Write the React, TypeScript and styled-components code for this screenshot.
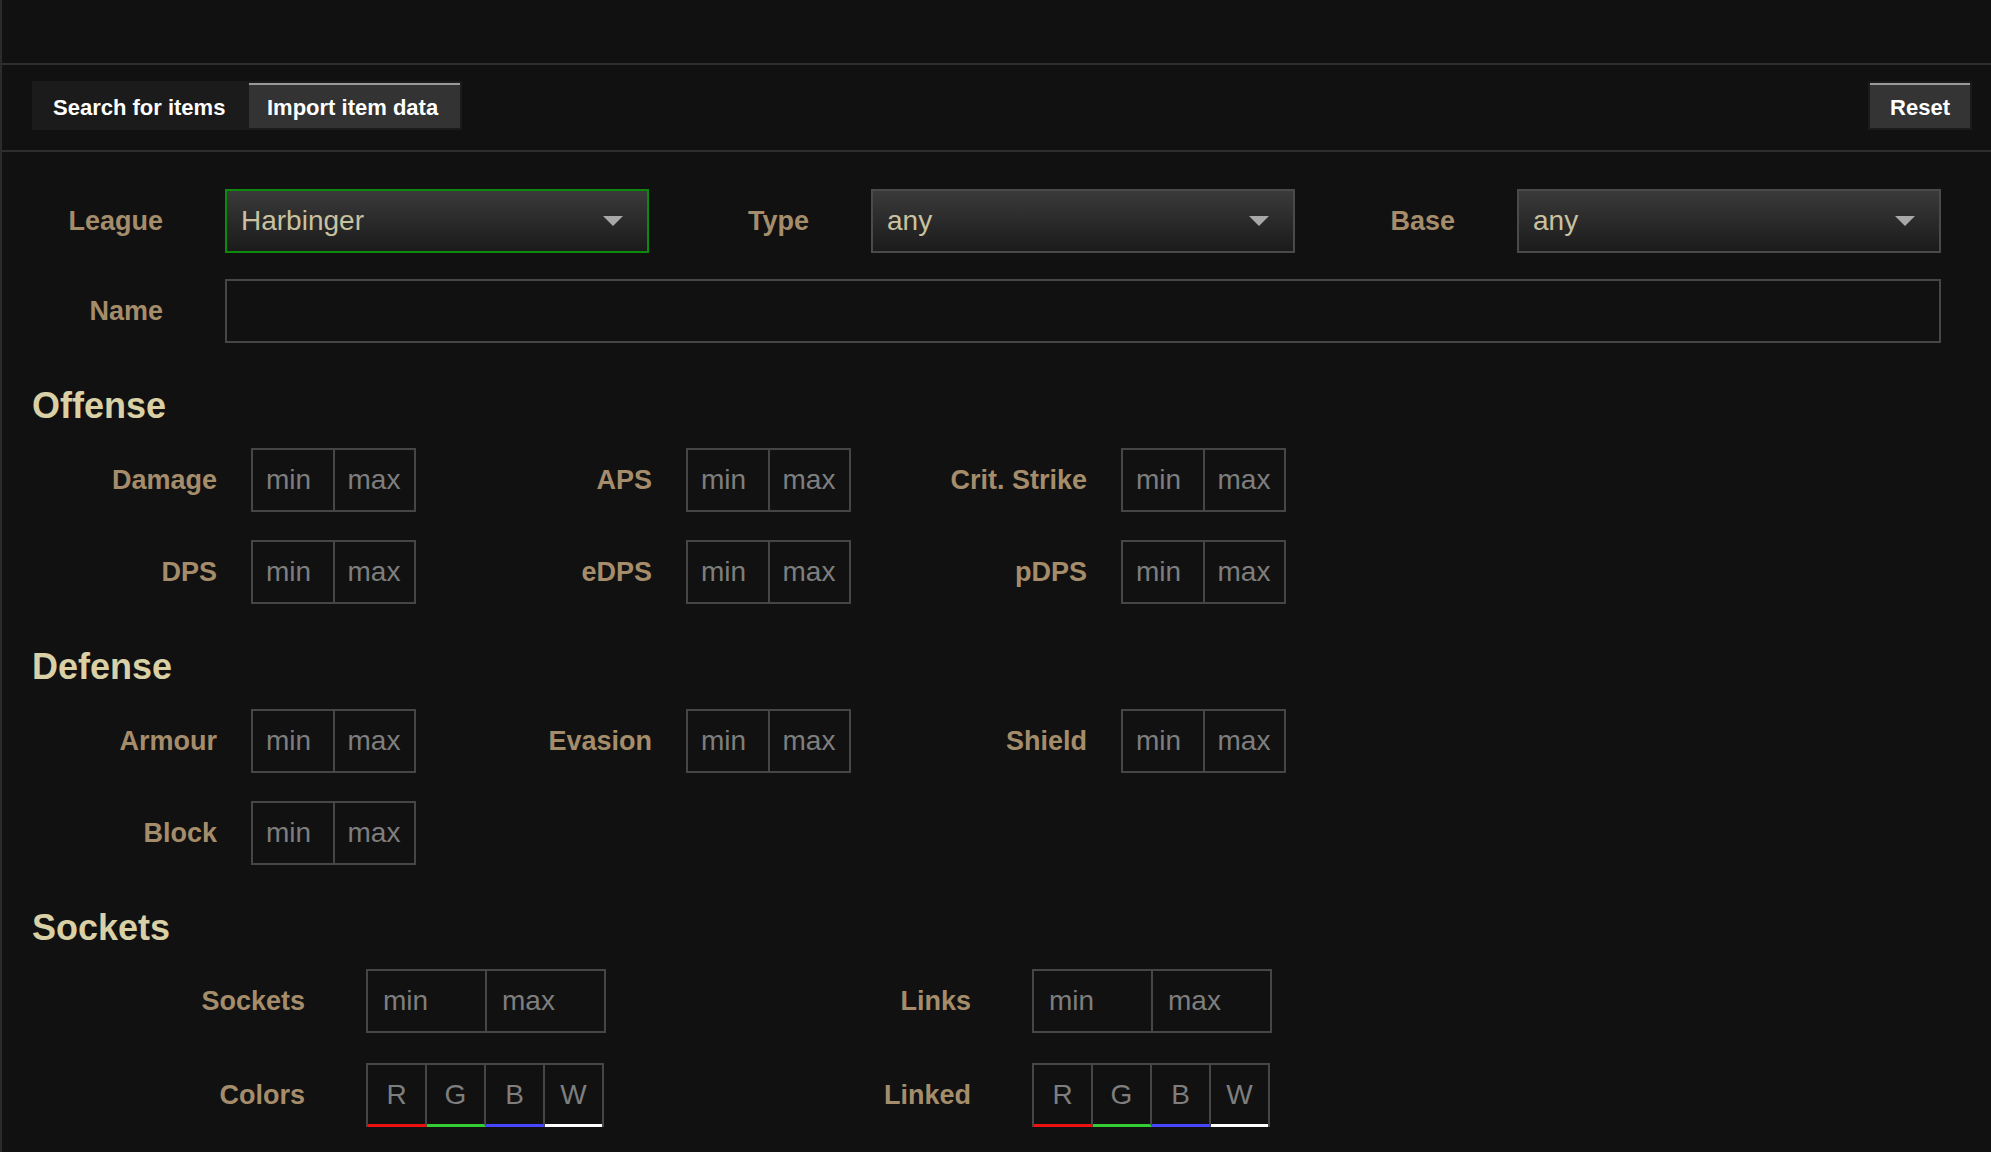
import React from "react";
import styled, { createGlobalStyle, css } from "styled-components";

const GlobalStyle = createGlobalStyle`
  html, body {
    margin: 0;
    padding: 0;
    background: #111111;
  }
  body {
    font-family: "Liberation Sans", Arial, Helvetica, sans-serif;
    -webkit-font-smoothing: antialiased;
  }
  * { box-sizing: border-box; }
`;

const Page = styled.div`
  min-height: 1152px;
  border-left: 2px solid #2b2b2b;
  background: #111111;
`;

const TopBar = styled.div`
  height: 65px;
  border-bottom: 2px solid #2e2e2e;
`;

const TabBar = styled.div`
  height: 87px;
  padding: 16px 19px 0 30px;
  display: flex;
  align-items: flex-start;
  justify-content: space-between;
  border-bottom: 2px solid #2e2e2e;
`;

const Tabs = styled.div`
  display: flex;
  height: 49px;
  padding: 2px 2px 2px 0;
  background: #1b1b1b;
`;

const Tab = styled.div<{ $active?: boolean }>`
  height: 45px;
  display: flex;
  align-items: center;
  font-size: 22px;
  font-weight: bold;
  color: #ffffff;
  ${(p) =>
    p.$active
      ? css`
          width: 211px;
          padding: 3px 0 0 18px;
          background: #333333;
          border-top: 2px solid #9a9a9a;
        `
      : css`
          width: 217px;
          padding: 5px 0 0 21px;
          background: #1b1b1b;
        `}
`;

const ResetButton = styled.div`
  width: 104px;
  height: 49px;
  padding: 2px;
  background: #1b1b1b;
  display: flex;
`;

const ResetInner = styled.div`
  flex: 1;
  display: flex;
  align-items: center;
  justify-content: center;
  padding-top: 3px;
  background: #343434;
  border-top: 2px solid #9a9a9a;
  font-size: 22px;
  font-weight: bold;
  color: #ffffff;
`;

const Form = styled.div`
  padding: 37px 50px 0 30px;
`;

const TopGrid = styled.div`
  display: grid;
  grid-template-columns: 193px 424px 222px 424px 222px 424px;
  row-gap: 26px;
  align-items: center;
`;

const TopLabel = styled.div`
  font-size: 27px;
  font-weight: bold;
  color: #a58d6c;
  text-align: right;
  padding-right: 62px;
  white-space: nowrap;
`;

const Select = styled.div<{ $focus?: boolean }>`
  height: 64px;
  border: 2px solid ${(p) => (p.$focus ? "#0b8a0b" : "#4a4a4a")};
  background: linear-gradient(#3a3a3a, #1b1b1b);
  display: flex;
  align-items: center;
  justify-content: space-between;
  padding: 0 24px 0 14px;
  font-size: 28px;
  color: #c9c1a0;
`;

const Arrow = styled.span`
  width: 0;
  height: 0;
  border-left: 10px solid transparent;
  border-right: 10px solid transparent;
  border-top: 10px solid #a8a8a8;
`;

const NameInput = styled.div`
  grid-column: 2 / span 5;
  height: 64px;
  border: 2px solid #464646;
  background: #111111;
`;

const SectionTitle = styled.div`
  margin-top: 43px;
  height: 40px;
  line-height: 40px;
  font-size: 36px;
  font-weight: bold;
  color: #d9d0a6;
`;

const StatGrid = styled.div`
  margin-top: 22px;
  display: grid;
  grid-template-columns: repeat(3, 384px);
  column-gap: 51px;
  row-gap: 28px;
  justify-content: start;
`;

const StatGroup = styled.div`
  display: flex;
  align-items: center;
`;

const StatLabel = styled.div`
  width: 185px;
  margin-right: 34px;
  text-align: right;
  font-size: 27px;
  font-weight: bold;
  color: #a58d6c;
  white-space: nowrap;
`;

const RangeBox = styled.div<{ $wide?: boolean }>`
  display: flex;
  height: 64px;
  width: ${(p) => (p.$wide ? "240px" : "165px")};
  border: 2px solid #464646;
`;

const RangeCell = styled.div<{ $first?: boolean; $wide?: boolean }>`
  flex: 1;
  display: flex;
  align-items: center;
  padding-left: ${(p) => (p.$wide ? "15px" : "13px")};
  font-size: 28px;
  color: #7e7e7e;
  ${(p) => p.$first && "border-right: 2px solid #464646;"}
`;

const SocketGrid = styled.div`
  margin-top: 21px;
  display: grid;
  grid-template-columns: 606px 574px;
  column-gap: 60px;
  row-gap: 30px;
  justify-content: start;
`;

const SocketLabel = styled(StatLabel)`
  width: 273px;
  margin-right: 61px;
`;

const ColorBox = styled.div`
  display: flex;
  width: 238px;
  height: 64px;
  border: 2px solid #464646;
  border-bottom: none;
`;

const ColorCell = styled.div<{ $line: string; $last?: boolean }>`
  flex: 1;
  display: flex;
  align-items: center;
  justify-content: center;
  font-size: 28px;
  color: #7e7e7e;
  border-bottom: 3px solid ${(p) => p.$line};
  ${(p) => !p.$last && "border-right: 2px solid #464646;"}
`;

const Range = ({ wide }: { wide?: boolean }) => (
  <RangeBox $wide={wide}>
    <RangeCell $first $wide={wide}>min</RangeCell>
    <RangeCell $wide={wide}>max</RangeCell>
  </RangeBox>
);

const Stat = ({ label }: { label: string }) => (
  <StatGroup>
    <StatLabel>{label}</StatLabel>
    <Range />
  </StatGroup>
);

const colors = [
  { l: "R", c: "#ee1111" },
  { l: "G", c: "#33cc33" },
  { l: "B", c: "#4747ff" },
  { l: "W", c: "#ffffff" },
];

const Colors = () => (
  <ColorBox>
    {colors.map((c, i) => (
      <ColorCell key={c.l} $line={c.c} $last={i === colors.length - 1}>
        {c.l}
      </ColorCell>
    ))}
  </ColorBox>
);

export default function App() {
  return (
    <>
      <GlobalStyle />
      <Page>
        <TopBar />
        <TabBar>
          <Tabs>
            <Tab>Search for items</Tab>
            <Tab $active>Import item data</Tab>
          </Tabs>
          <ResetButton>
            <ResetInner>Reset</ResetInner>
          </ResetButton>
        </TabBar>
        <Form>
          <TopGrid>
            <TopLabel>League</TopLabel>
            <Select $focus>
              Harbinger
              <Arrow />
            </Select>
            <TopLabel>Type</TopLabel>
            <Select>
              any
              <Arrow />
            </Select>
            <TopLabel>Base</TopLabel>
            <Select>
              any
              <Arrow />
            </Select>
            <TopLabel>Name</TopLabel>
            <NameInput />
          </TopGrid>

          <SectionTitle>Offense</SectionTitle>
          <StatGrid>
            <Stat label="Damage" />
            <Stat label="APS" />
            <Stat label="Crit. Strike" />
            <Stat label="DPS" />
            <Stat label="eDPS" />
            <Stat label="pDPS" />
          </StatGrid>

          <SectionTitle>Defense</SectionTitle>
          <StatGrid>
            <Stat label="Armour" />
            <Stat label="Evasion" />
            <Stat label="Shield" />
            <Stat label="Block" />
          </StatGrid>

          <SectionTitle>Sockets</SectionTitle>
          <SocketGrid>
            <StatGroup>
              <SocketLabel>Sockets</SocketLabel>
              <Range wide />
            </StatGroup>
            <StatGroup>
              <SocketLabel>Links</SocketLabel>
              <Range wide />
            </StatGroup>
            <StatGroup>
              <SocketLabel>Colors</SocketLabel>
              <Colors />
            </StatGroup>
            <StatGroup>
              <SocketLabel>Linked</SocketLabel>
              <Colors />
            </StatGroup>
          </SocketGrid>
        </Form>
      </Page>
    </>
  );
}
